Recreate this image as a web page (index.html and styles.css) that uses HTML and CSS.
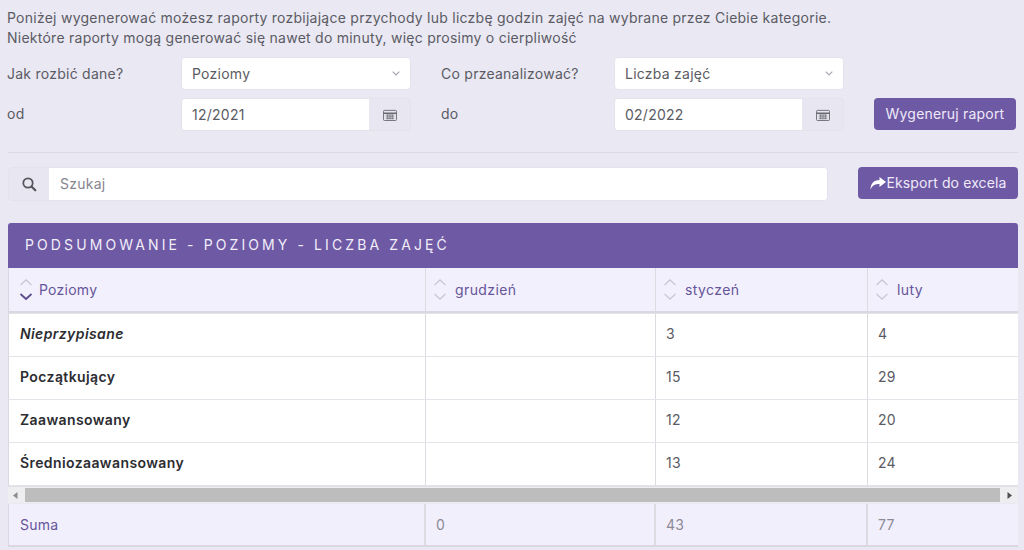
FILE: index.html
```html
<!DOCTYPE html>
<html lang="pl">
<head>
<meta charset="utf-8">
<title>Raporty</title>
<link rel="stylesheet" href="styles.css">
</head>
<body>
<p class="intro">Poniżej wygenerować możesz raporty rozbijające przychody lub liczbę godzin zajęć na wybrane przez Ciebie kategorie.<br>Niektóre raporty mogą generować się nawet do minuty, więc prosimy o cierpliwość</p>
<div class="form">
  <label>Jak rozbić dane?</label>
  <div class="control select"><span>Poziomy</span><svg class="chev" width="8" height="5" viewBox="0 0 8 5"><path d="M.7.7 4 4 7.3.7" fill="none" stroke="#a5a5b0" stroke-width="1.1"/></svg></div>
  <label>Co przeanalizować?</label>
  <div class="control select"><span>Liczba zajęć</span><svg class="chev" width="8" height="5" viewBox="0 0 8 5"><path d="M.7.7 4 4 7.3.7" fill="none" stroke="#a5a5b0" stroke-width="1.1"/></svg></div>
  <div></div>
  <label>od</label>
  <div class="control date"><span class="date-value">12/2021</span><span class="addon"><svg width="14" height="12" viewBox="0 0 15 13"><g fill="none" stroke="#6a6a72"><rect x=".5" y="1.5" width="14" height="11" rx="1"/><path d="M.5 4.500h14" stroke-width="1.6"/><path d="M3 6.500h9M3 8.500h9M3 10.500h9M5 6v5M7.500 6v5M10 6v5" stroke-width=".8"/></g></svg></span></div>
  <label>do</label>
  <div class="control date"><span class="date-value">02/2022</span><span class="addon"><svg width="14" height="12" viewBox="0 0 15 13"><g fill="none" stroke="#6a6a72"><rect x=".5" y="1.5" width="14" height="11" rx="1"/><path d="M.5 4.500h14" stroke-width="1.6"/><path d="M3 6.500h9M3 8.500h9M3 10.500h9M5 6v5M7.500 6v5M10 6v5" stroke-width=".8"/></g></svg></span></div>
  <button class="btn generate">Wygeneruj raport</button>
</div>
<hr class="rule">
<div class="search-row">
  <div class="search">
    <span class="search-icon"><svg width="16" height="16" viewBox="0 0 16 16"><circle cx="7" cy="7" r="4.700" fill="none" stroke="#55555c" stroke-width="1.800"/><path d="M10.500 10.500 14.300 14.300" stroke="#55555c" stroke-width="2.200" stroke-linecap="round"/></svg></span>
    <span class="search-input">Szukaj</span>
  </div>
  <button class="btn export"><svg width="16" height="13" viewBox="0 0 16 13"><path d="M9.500 0 16 5 9.500 10V7C5.500 7 2.500 8 .5 12.500.5 7 3.500 3 9.500 3Z" fill="#fff"/></svg>Eksport do excela</button>
</div>
<section class="card">
  <h2 class="card-title">PODSUMOWANIE - POZIOMY - LICZBA ZAJĘĆ</h2>
  <div class="grid head">
    <div class="cell"><svg class="sort" width="14" height="23" viewBox="0 0 14 23"><path d="M1.500 7 7 2l5.500 5" fill="none" stroke="#c9c8d2" stroke-width="1.300"/><path d="M1.500 16 7 21l5.500-5" fill="none" stroke="#5d4a8f" stroke-width="1.800"/></svg>Poziomy</div>
    <div class="cell"><svg class="sort" width="14" height="23" viewBox="0 0 14 23"><path d="M1.500 7 7 2l5.500 5M1.500 16 7 21l5.500-5" fill="none" stroke="#c9c8d2" stroke-width="1.300"/></svg>grudzień</div>
    <div class="cell"><svg class="sort" width="14" height="23" viewBox="0 0 14 23"><path d="M1.500 7 7 2l5.500 5M1.500 16 7 21l5.500-5" fill="none" stroke="#c9c8d2" stroke-width="1.300"/></svg>styczeń</div>
    <div class="cell"><svg class="sort" width="14" height="23" viewBox="0 0 14 23"><path d="M1.500 7 7 2l5.500 5M1.500 16 7 21l5.500-5" fill="none" stroke="#c9c8d2" stroke-width="1.300"/></svg>luty</div>
  </div>
  <div class="grid row"><div class="cell name italic">Nieprzypisane</div><div class="cell"></div><div class="cell">3</div><div class="cell">4</div></div>
  <div class="grid row"><div class="cell name">Początkujący</div><div class="cell"></div><div class="cell">15</div><div class="cell">29</div></div>
  <div class="grid row"><div class="cell name">Zaawansowany</div><div class="cell"></div><div class="cell">12</div><div class="cell">20</div></div>
  <div class="grid row"><div class="cell name">Średniozaawansowany</div><div class="cell"></div><div class="cell">13</div><div class="cell">24</div></div>
  <div class="scrollbar">
    <svg class="arrow" width="5" height="7" viewBox="0 0 5 7"><path d="M4.500 0v7L0 3.500Z" fill="#8d8d8d"/></svg>
    <div class="thumb"></div>
    <svg class="arrow" width="5" height="7" viewBox="0 0 5 7"><path d="M.5 0v7L5 3.500Z" fill="#505050"/></svg>
  </div>
  <div class="grid foot"><div class="cell total">Suma</div><div class="cell">0</div><div class="cell">43</div><div class="cell">77</div></div>
</section>
</body>
</html>
```
FILE: styles.css
```css
* { box-sizing: border-box; }
html, body { height: 100%; }
body {
  margin: 0;
  height: 550px;
  overflow: hidden;
  padding: 8px 6px 0 8px;
  background: #e9e8f3;
  color: #5b5b63;
  font: 14px/20px "Inter", "Liberation Sans", sans-serif;
  letter-spacing: .25px;
}
.intro { margin: 0 0 9px -1px; }
.form {
  display: grid;
  grid-template-columns: 173px 230px 203px 230px 172px;
  grid-auto-rows: 33px;
  row-gap: 8px;
  align-items: center;
}
.form label { margin-left: -1px; }
.form label:nth-of-type(even) { margin-left: 30px; }
.form label:nth-of-type(n+3) { margin-bottom: 2px; }
.control {
  height: 33px;
  background: #fff;
  border-radius: 4px;
  display: flex;
  align-items: center;
  border: 1px solid #e4e3ec;
}
.select { justify-content: space-between; padding: 0 10px; }
.date { background: #e8e7f1; overflow: hidden; }
.date-value {
  flex: 1;
  height: 100%;
  background: #fff;
  padding-left: 10px;
  line-height: 31px;
}
.addon { width: 41px; display: flex; justify-content: center; align-items: center; }
.btn {
  border: 0;
  border-radius: 4px;
  background: #6e59a5;
  color: #eeeaf8;
  font: inherit;
  letter-spacing: .2px;
  white-space: nowrap;
  padding: 0;
}
.generate { width: 142px; height: 32px; margin-left: 30px; justify-self: start; margin-top: -2px; }
.rule { border: 0; border-top: 1px solid #dcdbe4; margin: 21px 0 14px; }
.search-row { display: flex; justify-content: space-between; align-items: flex-start; width: 1010px; }
.search {
  width: 820px;
  height: 34px;
  display: flex;
  border-radius: 4px;
  border: 1px solid #e4e3ec;
  overflow: hidden;
  background: #e8e7f1;
}
.search-icon { width: 40px; display: flex; align-items: center; justify-content: center; }
.search-input {
  flex: 1;
  background: #fff;
  color: #85858e;
  padding-left: 11px;
  line-height: 32px;
}
.export {
  width: 160px;
  height: 32px;
  display: flex;
  align-items: center;
  justify-content: center;
  gap: 1px;
  letter-spacing: .12px;
}
.card { width: 1010px; margin-top: 22px; }
.card-title {
  margin: 0;
  height: 45px;
  padding-left: 17px;
  background: #6e59a5;
  border-radius: 3px 3px 0 0;
  color: #f1eef9;
  font-size: 14px;
  font-weight: 400;
  line-height: 44px;
  letter-spacing: 3.1px;
}
.grid {
  display: grid;
  grid-template-columns: 417px 230px 212px 150px;
  border-left: 1px solid #d9d8e0;
}
.cell {
  display: flex;
  align-items: center;
  padding-left: 10px;
  border-right: 1px solid #dcdbe2;
  min-width: 0;
}
.cell:last-child { border-right: 0; }
.head { height: 45px; background: #f3f0fd; color: #65559a; border-bottom: 2px solid #d9d8e0; }
.head .cell { gap: 6px; padding-left: 10px; }
.head .cell:nth-child(n+2) { padding-left: 7px; gap: 8px; letter-spacing: .4px; }
.sort { flex: none; }
.row { height: 43px; background: #fff; border-top: 1px solid #e4e3ea; }
.row .cell { padding-bottom: 2px; }
.name { color: #2c2c31; font-weight: 600; padding-left: 11px; letter-spacing: .4px; }
.italic { font-style: italic; }
.scrollbar {
  height: 16px;
  margin-top: 2px;
  background: #eeeef1;
  display: flex;
  align-items: center;
  justify-content: space-between;
  padding: 0 6px 0 14px;
  position: relative;
  box-shadow: 0 -2px 0 #e2e1e8;
}
.arrow:first-child { position: absolute; left: 5px; }
.thumb { width: 975px; height: 14px; background: #bdbdbd; margin-left: 3px; }
.foot {
  height: 43px;
  margin-top: 1px;
  background: #f2effd;
  color: #8b8a96;
  border-bottom: 2px solid #d9d8e0;
}
.foot .cell { border-right-width: 2px; }
.foot .cell:last-child { border-right: 0; }
.foot .total { color: #65559a; padding-left: 11px; }
```
